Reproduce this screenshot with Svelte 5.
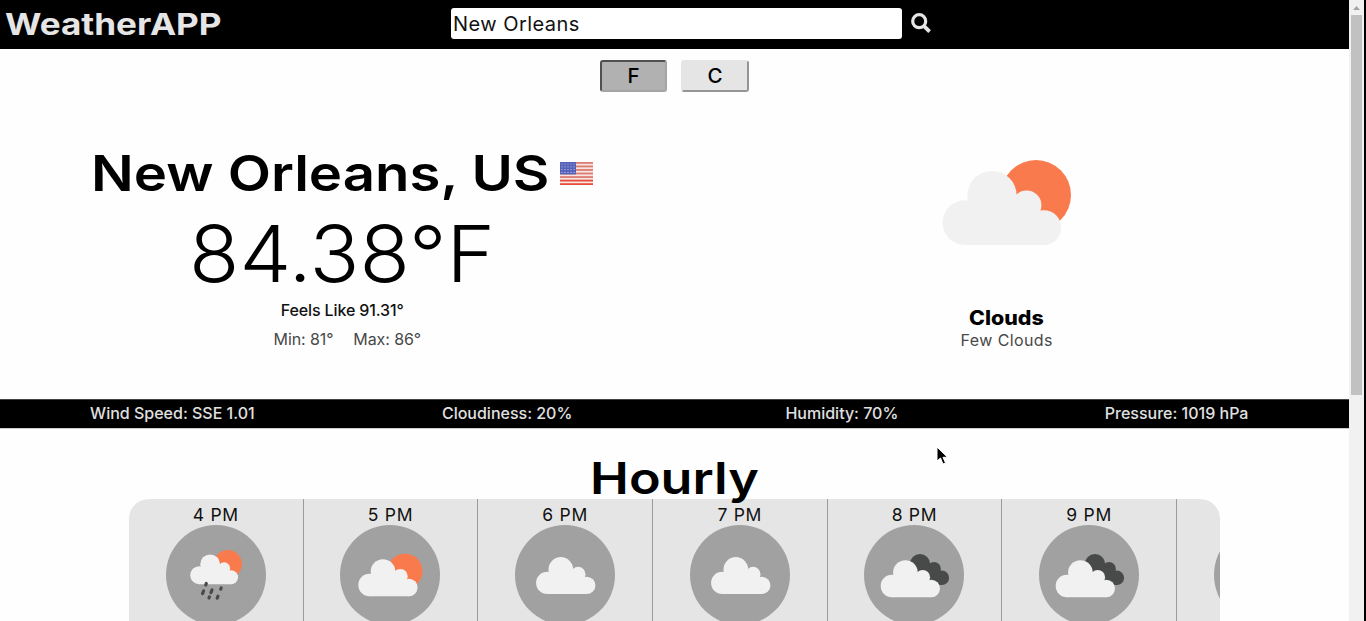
<script>
  const stats = ['Wind Speed: SSE 1.01', 'Cloudiness: 20%', 'Humidity: 70%', 'Pressure: 1019 hPa'];
  const hours = [
    { time: '4 PM', kind: 'rain', x: 24, y: 25, s: 0.403 },
    { time: '5 PM', kind: 'sun', x: 18, y: 28.7, s: 0.5 },
    { time: '6 PM', kind: 'cloud', x: 20.8, y: 26.6, s: 0.5 },
    { time: '7 PM', kind: 'cloud', x: 20.8, y: 26.6, s: 0.5 },
    { time: '8 PM', kind: 'dark', x: 16.4, y: 29.7, s: 0.5 },
    { time: '9 PM', kind: 'dark', x: 16.4, y: 29.7, s: 0.5 },
    { time: '', kind: 'cloud', x: 20.8, y: 26.6, s: 0.5 }
  ];
  let city = $state('New Orleans');
</script>

{#snippet cloud()}
  <g fill="#f1f1f1">
    <circle cx="23" cy="62.6" r="22.4" />
    <circle cx="50" cy="35.5" r="24.6" />
    <circle cx="84.6" cy="45.2" r="14.8" />
    <circle cx="101.8" cy="67.6" r="17.4" />
    <path d="M23 85V50L48 30L72 40L86 50L102 60V85Z" />
  </g>
{/snippet}

<div class="screen">
  <div class="page">
    <header>
      <div class="brand"><span>WeatherAPP</span></div>
      <form class="search" onsubmit={(e) => e.preventDefault()}>
        <input bind:value={city} aria-label="City" />
        <button class="go" aria-label="Search">
          <svg width="20" height="20" viewBox="0 0 20 20">
            <circle cx="8.2" cy="8.2" r="6.5" fill="none" stroke="#e5e5e5" stroke-width="3.2" />
            <path d="M12.8 12.8L18.6 18.6" stroke="#e5e5e5" stroke-width="3.8" />
          </svg>
        </button>
      </form>
    </header>

    <div class="units">
      <button class="unit active">F</button>
      <button class="unit">C</button>
    </div>

    <main>
      <section class="now">
        <div class="place">
          <h1><span>New Orleans, US</span></h1>
          <svg class="flag" width="33" height="23" viewBox="0 0 33 23">
            <rect width="33" height="23" fill="#f6e4e0" />
            {#each [0, 1, 2, 3, 4, 5, 6] as i}
              <rect y={i * 3.54} width="33" height="1.77" fill={i > 4 ? '#e84a38' : '#dc7b70'} />
            {/each}
            <rect width="16" height="12.4" fill="#5660b8" />
            {#each [0, 1, 2, 3] as r}
              {#each [0, 1, 2, 3, 4] as c}
                <circle cx={2 + c * 3} cy={2 + r * 2.8} r="0.6" fill="#c9cdf0" />
              {/each}
            {/each}
          </svg>
        </div>
        <div class="temp"><span>84.38°F</span></div>
        <div class="feels">Feels Like 91.31°</div>
        <div class="range"><span>Min: 81°</span><span>Max: 86°</span></div>
      </section>
      <section class="sky">
        <svg width="130" height="86" viewBox="0 0 130 86">
          <circle cx="94" cy="35" r="35" fill="#f97b4d" />
          {@render cloud()}
        </svg>
        <h2><span>Clouds</span></h2>
        <p>Few Clouds</p>
      </section>
    </main>

    <div class="stats">
      {#each stats as stat}
        <div class="stat">{stat}</div>
      {/each}
    </div>

    <h3><span>Hourly</span></h3>
    <div class="hours">
      {#each hours as h}
        <div class="hour">
          <div class="time">{h.time}</div>
          <svg width="100" height="100" viewBox="0 0 100 100">
            <circle cx="50" cy="50" r="50" fill="#a1a1a1" />
            {#if h.kind === 'dark'}
              <g fill="#484a49">
                <circle cx="56" cy="39.3" r="10.2" />
                <circle cx="70" cy="44" r="6.9" />
                <circle cx="77.8" cy="52.8" r="7.3" />
                <path d="M56 39L70 42L78 50V60H66Z" />
              </g>
            {/if}
            <g transform="translate({h.x} {h.y}) scale({h.s})">
              {#if h.kind === 'sun' || h.kind === 'rain'}
                <circle cx="94" cy="35" r="35" fill="#f97b4d" />
              {/if}
              {@render cloud()}
            </g>
            {#if h.kind === 'rain'}
              <path
                stroke="#484a49"
                stroke-width="3.2"
                stroke-linecap="round"
                d="M40.3 58.5L39.8 60M37.6 66L36.5 68.6M46 65L44.9 67.6M55.2 63L54.7 64.2M43.4 71.8L43 73M52 71.2L51.2 73.2"
              />
            {/if}
          </svg>
        </div>
      {/each}
    </div>
  </div>

  <div class="scrollbar">
    <svg width="7" height="4" viewBox="0 0 7 4"><path d="M3.5 0L7 4H0Z" fill="#a3a3a3" /></svg>
    <div class="thumb"></div>
  </div>

  <svg class="pointer" width="14" height="20" viewBox="0 0 14 20">
    <path d="M1 1V15L4.5 12L7 18L9.5 17L7 11.3H11.5Z" fill="#000" stroke="#fff" stroke-width="1" />
  </svg>
</div>

<style>
  :global(body) {
    margin: 0;
    overflow: hidden;
    background: #fff;
  }
  .screen {
    display: flex;
    position: relative;
    width: 1366px;
    height: 621px;
    overflow: hidden;
    font-family: Inter, 'Open Sans', sans-serif;
    color: #000;
  }
  .page {
    width: 1349px;
    height: 621px;
    overflow: hidden;
    background: #fefefe;
  }
  header {
    display: grid;
    grid-template-columns: 451px 1fr;
    height: 49px;
    background: #000;
  }
  .brand {
    padding-left: 5px;
    font-size: 30px;
    font-weight: 700;
    line-height: 48px;
    color: #e5e5e5;
  }
  .brand span,
  h1 span,
  h3 span,
  h2 span,
  .temp span {
    display: inline-block;
    transform-origin: left;
    white-space: nowrap;
  }
  .brand span {
    transform: scaleX(1.17);
  }
  h1 span {
    transform: scaleX(1.126);
  }
  h2 span {
    transform: scaleX(1.07);
  }
  h3 span {
    transform: scaleX(1.185);
  }
  .temp span {
    transform: scaleX(1.057);
  }
  .search {
    display: flex;
    align-items: flex-start;
    padding-top: 8px;
  }
  input {
    box-sizing: border-box;
    width: 451px;
    height: 31px;
    padding: 0 2px;
    border: 0;
    border-radius: 3px;
    background: #fff;
    font: 400 20px Inter, sans-serif;
    letter-spacing: 0.45px;
    color: #111;
  }
  .go {
    display: flex;
    margin: 5px 0 0 9px;
    padding: 0;
    border: 0;
    background: none;
  }
  .units {
    display: flex;
    gap: 14px;
    padding: 11px 0 0 600px;
  }
  .unit {
    box-sizing: border-box;
    width: 68px;
    height: 32px;
    padding: 0;
    border: 2px solid;
    border-color: #e5e5e5 #959595 #959595 #e5e5e5;
    border-radius: 3px;
    background: #e5e5e5;
    font: 500 20.5px/28px Inter, sans-serif;
    color: #000;
  }
  .unit.active {
    width: 67px;
    border-color: #505050 #a4a4a4 #a4a4a4 #505050;
    background: #b1b1b1;
  }
  main {
    display: grid;
    grid-template-columns: 1fr 1fr;
    height: 307px;
    padding: 0 10px;
  }
  .now,
  .sky {
    display: flex;
    flex-direction: column;
    align-items: center;
  }
  .place {
    display: flex;
    align-items: center;
    gap: 12px;
    height: 60px;
    margin-top: 51px;
  }
  h1 {
    width: 457px;
    margin: 0 0 0 -1px;
    font-size: 50px;
    font-weight: 600;
    line-height: 60px;
  }
  .temp {
    width: 306px;
    height: 90px;
    margin-top: 6px;
    font-size: 78px;
    font-weight: 300;
    line-height: 90px;
  }
  .feels {
    margin-top: 1px;
    font-size: 16px;
    font-weight: 500;
    line-height: 20px;
    letter-spacing: -0.12px;
    color: #111;
  }
  .range {
    display: flex;
    gap: 20px;
    margin: 9px 0 0 10px;
    font-size: 16px;
    line-height: 20px;
    letter-spacing: -0.1px;
    color: #484848;
  }
  .sky svg {
    margin-top: 68px;
  }
  h2 {
    width: 75px;
    margin: 60px 0 0;
    font-size: 20px;
    font-weight: 800;
    line-height: 24px;
  }
  p {
    margin: 0;
    font-size: 16px;
    line-height: 20px;
    letter-spacing: 0.4px;
    color: #484848;
  }
  .stats {
    box-sizing: border-box;
    display: grid;
    grid-template-columns: repeat(4, 1fr);
    height: 30px;
    padding: 0 5px;
    border-top: 1px solid #444;
    border-bottom: 1px solid #ccc;
    background: #000;
  }
  .stat {
    font-size: 16px;
    font-weight: 500;
    line-height: 27px;
    text-align: center;
    color: #e0e0e0;
  }
  h3 {
    position: relative;
    z-index: 1;
    width: 169px;
    height: 70px;
    margin: 0 auto;
    font-size: 44px;
    font-weight: 600;
    line-height: 98px;
  }
  .hours {
    display: flex;
    width: 1091px;
    height: 160px;
    margin: 0 auto;
    overflow: hidden;
    border-radius: 20px 20px 0 0;
    background: #e5e5e5;
  }
  .hour {
    box-sizing: border-box;
    display: flex;
    flex: 0 0 174.67px;
    flex-direction: column;
    align-items: center;
    border-right: 1px solid #9b9b9b;
  }
  .hour svg {
    flex: none;
  }
  .time {
    height: 26px;
    font-size: 17.5px;
    line-height: 31px;
    letter-spacing: 0.7px;
    color: #111;
  }
  .scrollbar {
    box-sizing: border-box;
    display: flex;
    flex-direction: column;
    align-items: center;
    width: 17px;
    height: 621px;
    padding-top: 6px;
    border-right: 2px solid #000;
    background: #f1f1f1;
  }
  .thumb {
    width: 11px;
    height: 380px;
    margin-top: 5px;
    background: #c1c1c1;
  }
  .pointer {
    position: absolute;
    left: 936px;
    top: 446px;
  }
</style>
